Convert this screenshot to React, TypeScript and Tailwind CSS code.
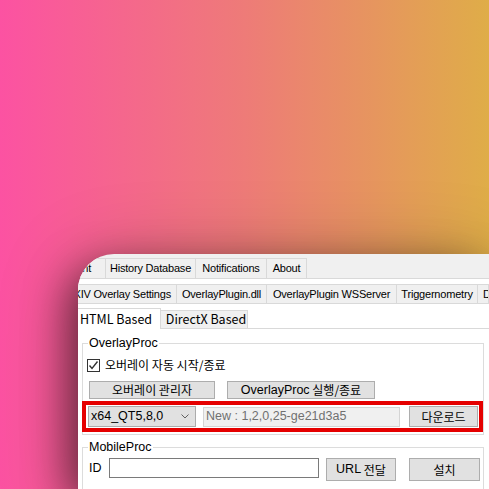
import React from "react";

const tabFont = "font-['Liberation_Sans',sans-serif] text-[11px] tracking-[-0.2px] text-black";
const kr = "font-['Noto_Sans_CJK_KR',sans-serif] text-black";
const lat = "font-['Liberation_Sans','Noto_Sans_CJK_KR',sans-serif]";

function Tab({ className = "", children }: { className?: string; children: React.ReactNode }) {
  return (
    <div
      className={`flex shrink-0 items-center overflow-hidden whitespace-nowrap border-t border-r border-[#d9d9d9] bg-[#f0f0f0] ${tabFont} ${className}`}
    >
      {children}
    </div>
  );
}

function Button({ className = "", children }: { className?: string; children: React.ReactNode }) {
  return (
    <div
      className={`flex shrink-0 items-center justify-center border border-[#adadad] bg-[#e1e1e1] text-[12px] leading-none ${kr} ${className}`}
    >
      {children}
    </div>
  );
}

export default function App() {
  return (
    <div className="relative h-[489px] w-[489px] overflow-hidden bg-[linear-gradient(90deg,#fc52a2_0%,#ee7b78_50%,#dfad48_100%)]">
      {/* settings window */}
      <div className="absolute left-[78px] top-[254px] flex h-[235px] w-[411px] flex-col overflow-hidden rounded-tl-[36px] bg-[#f0f0f0] shadow-[-10px_14px_40px_rgba(0,0,0,0.5),0_10px_80px_rgba(0,0,0,0.25)]">
        {/* main tabs */}
        <div className="flex h-[25px] items-end border-b border-[#d9d9d9] pt-[4px]">
          <Tab className="h-[20px] w-[28px] pl-[2px]">int</Tab>
          <Tab className="h-[20px] w-[90px] justify-center">History Database</Tab>
          <Tab className="h-[20px] w-[71px] justify-center">Notifications</Tab>
          <Tab className="h-[20px] w-[40px] justify-center">About</Tab>
        </div>

        <div className="flex flex-1 flex-col bg-white">
          {/* plugin tabs */}
          <div className="flex h-[25px] items-end border-b border-[#d9d9d9] pt-[5px]">
            <Tab className="h-[19px] w-[99px] justify-end pr-[5px]">XIV Overlay Settings</Tab>
            <Tab className="h-[19px] w-[90px] justify-center">OverlayPlugin.dll</Tab>
            <Tab className="h-[19px] w-[130px] justify-center">OverlayPlugin WSServer</Tab>
            <Tab className="h-[19px] w-[81px] justify-center">Triggernometry</Tab>
            <Tab className="h-[19px] w-[11px] pl-[5px]">D</Tab>
          </div>

          {/* overlay type tabs */}
          <div className="flex h-[25px] items-end border-b border-[#d9d9d9] pt-[4px]">
            <div className={`-mb-px flex h-[21px] w-[83px] items-center border-r border-t border-[#d9d9d9] bg-white pl-[2px] text-[12.5px] ${kr}`}>
              HTML Based
            </div>
            <div className={`flex h-[18px] w-[87px] items-center justify-center border-r border-t border-[#d9d9d9] bg-[#f0f0f0] pl-[4px] text-[12.5px] ${kr}`}>
              DirectX Based
            </div>
          </div>

          <div className="px-[4px] pt-[6px]">
            {/* OverlayProc group */}
            <fieldset className="w-[402px] border border-[#dcdcdc] pb-[2px]">
              <legend className={`ml-[5px] px-[1px] text-[12.5px] leading-[16px] text-black ${lat}`}>OverlayProc</legend>
              <div className="ml-[4px] mt-[6px] flex h-[16px] items-center gap-[5px]">
                <div className="flex h-[13px] w-[13px] items-center justify-center border border-[#333] bg-white">
                  <svg width="11" height="11" viewBox="0 0 11 11">
                    <polyline points="1.5,5.5 4,8.5 9.5,1.5" fill="none" stroke="#333" strokeWidth="1.4" />
                  </svg>
                </div>
                <span className={`text-[12px] leading-none ${kr}`}>오버레이 자동 시작/종료</span>
              </div>
              <div className="ml-[6px] mt-[8px] flex h-[18px] gap-[12px]">
                <Button className="h-[18px] w-[126px]">오버레이 관리자</Button>
                <Button className="h-[18px] w-[148px]">
                  <span className={`${lat} text-[12.5px]`}>OverlayProc</span>&nbsp;실행/종료
                </Button>
              </div>
              <div className="-ml-px mt-[2px] flex h-[31px] w-[401px] items-center border-4 border-[#e50000] pl-[2px]">
                <div className="flex h-[21px] w-[108px] items-center justify-between border border-[#acacac] bg-[#e1e1e1] pl-[2px] pr-[6px]">
                  <span className={`${lat} text-[12.5px] leading-none text-black`}>x64_QT5,8,0</span>
                  <svg width="8" height="5" viewBox="0 0 8 5">
                    <polyline points="0.5,0.5 4,4 7.5,0.5" fill="none" stroke="#606060" strokeWidth="1" />
                  </svg>
                </div>
                <div className="ml-[7px] flex h-[20px] w-[197px] items-center border border-[#d4d4d4] bg-[#f0f0f0] pl-[2px]">
                  <span className={`${lat} text-[12.5px] leading-none text-[#707070]`}>
                    New : 1,2,0,25-ge21d3a5
                  </span>
                </div>
                <Button className="ml-[9px] h-[21px] w-[69px]">다운로드</Button>
              </div>
            </fieldset>

            {/* MobileProc group */}
            <fieldset className="mt-[4px] w-[402px] border border-[#dcdcdc] pb-[10px]">
              <legend className={`ml-[5px] px-[1px] text-[12.5px] leading-[16px] text-black ${lat}`}>MobileProc</legend>
              <div className="ml-[6px] mt-[3px] flex items-start">
                <div className={`flex h-[20px] w-[20px] items-center text-[12.5px] text-black ${lat}`}>ID</div>
                <div className="h-[20px] w-[210px] border border-[#7a7a7a] bg-white" />
                <Button className="ml-[7px] h-[23px] w-[70px]">
                  <span className={`${lat} text-[12.5px]`}>URL</span>&nbsp;전달
                </Button>
                <Button className="ml-[13px] h-[23px] w-[71px]">설치</Button>
              </div>
            </fieldset>
          </div>
        </div>
      </div>
    </div>
  );
}
